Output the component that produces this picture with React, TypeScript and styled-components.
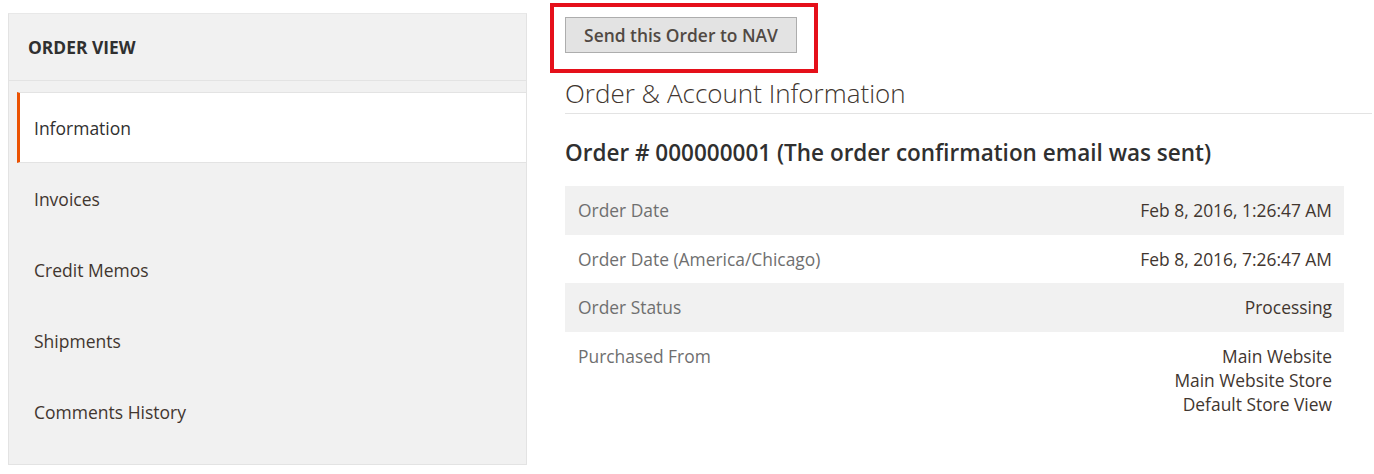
import React from "react";
import styled, { createGlobalStyle } from "styled-components";

const Global = createGlobalStyle`
  html, body { margin: 0; padding: 0; background: #fff; }
  body { font-family: "Open Sans", "Noto Sans", sans-serif; color: #41362f; }
  * { box-sizing: border-box; }
`;

const Page = styled.div`
  display: flex;
  align-items: flex-start;
  width: 1374px;
  padding-left: 8px;
`;

const Sidebar = styled.aside`
  width: 519px;
  margin-top: 13px;
  padding-bottom: 17px;
  background: #f1f1f1;
  border: 1px solid #e3e3e3;
  border-top-color: #e8e8e8;
`;

const SideTitle = styled.div`
  height: 67px;
  display: flex;
  align-items: center;
  padding-left: 19px;
  font-size: 17.4px;
  font-weight: 700;
  color: #303030;
  text-transform: uppercase;
  border-bottom: 1px solid #e3e3e3;
`;

const NavList = styled.ul`
  list-style: none;
  margin: 11px 0 0 8px;
  padding: 0;
`;

const NavItem = styled.li<{ $active?: boolean }>`
  height: 71px;
  display: flex;
  align-items: center;
  padding-left: 14px;
  font-size: 17.5px;
  color: ${(p) => (p.$active ? "#303030" : "#41362f")};
  background: ${(p) => (p.$active ? "#fff" : "transparent")};
  border-left: 3px solid ${(p) => (p.$active ? "#eb5202" : "transparent")};
  border-top: 1px solid ${(p) => (p.$active ? "#e3e3e3" : "transparent")};
  border-bottom: 1px solid ${(p) => (p.$active ? "#e3e3e3" : "transparent")};
`;

const Main = styled.main`
  flex: 1;
  margin-left: 23px;
  padding-top: 3px;
`;

const Highlight = styled.div`
  width: 268px;
  height: 70px;
  border: 4px solid #e5101a;
  padding: 10px 0 0 11px;
`;

const Button = styled.button`
  width: 232px;
  height: 36px;
  background: #e3e3e3;
  border: 1px solid #adadad;
  color: #514943;
  font-family: "Open Sans", "Noto Sans", sans-serif;
  font-size: 17.4px;
  font-weight: 600;
  padding: 0;
  cursor: pointer;
`;

const Content = styled.div`
  padding-left: 15px;
  padding-right: 2px;
`;

const SectionTitle = styled.h2`
  margin: 5px 0 0;
  font-size: 26px;
  line-height: 30px;
  font-weight: 300;
  color: #41362f;
  padding-bottom: 5px;
  border-bottom: 1px solid #e3e3e3;
`;

const OrderTitle = styled.h3`
  margin: 26px 0 0;
  font-size: 22.5px;
  line-height: 26px;
  font-weight: 600;
  color: #303030;
`;

const Table = styled.div`
  width: 779px;
  margin-top: 20px;
  display: flex;
  flex-direction: column;
`;

const Row = styled.div<{ $shade?: boolean }>`
  display: flex;
  justify-content: space-between;
  align-items: flex-start;
  padding: 12px 12px 12.5px 13px;
  font-size: 17.4px;
  line-height: 24px;
  background: ${(p) => (p.$shade ? "#f1f1f1" : "#fff")};
`;

const Label = styled.div`
  color: #6f6f6f;
`;

const Value = styled.div`
  color: #41362f;
  text-align: right;
`;

const rows: { label: string; value: string[] }[] = [
  { label: "Order Date", value: ["Feb 8, 2016, 1:26:47 AM"] },
  { label: "Order Date (America/Chicago)", value: ["Feb 8, 2016, 7:26:47 AM"] },
  { label: "Order Status", value: ["Processing"] },
  { label: "Purchased From", value: ["Main Website", "Main Website Store", "Default Store View"] },
];

export default function App() {
  return (
    <>
      <Global />
      <Page>
        <Sidebar>
          <SideTitle>Order View</SideTitle>
          <NavList>
            <NavItem $active>Information</NavItem>
            <NavItem>Invoices</NavItem>
            <NavItem>Credit Memos</NavItem>
            <NavItem>Shipments</NavItem>
            <NavItem>Comments History</NavItem>
          </NavList>
        </Sidebar>
        <Main>
          <Highlight>
            <Button>Send this Order to NAV</Button>
          </Highlight>
          <Content>
            <SectionTitle>Order &amp; Account Information</SectionTitle>
            <OrderTitle>Order # 000000001 (The order confirmation email was sent)</OrderTitle>
            <Table>
              {rows.map((r, i) => (
                <Row key={r.label} $shade={i % 2 === 0}>
                  <Label>{r.label}</Label>
                  <Value>
                    {r.value.map((v) => (
                      <div key={v}>{v}</div>
                    ))}
                  </Value>
                </Row>
              ))}
            </Table>
          </Content>
        </Main>
      </Page>
    </>
  );
}
